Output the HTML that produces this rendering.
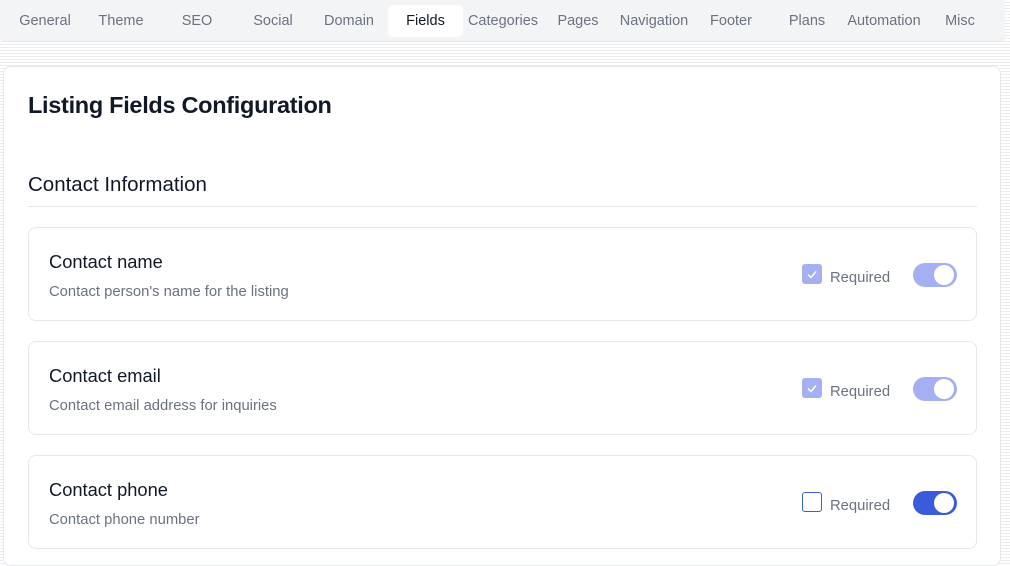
<!DOCTYPE html>
<html><head><style>
*{box-sizing:border-box;margin:0;padding:0}
body{width:1010px;height:558px;overflow:hidden;font-family:"Liberation Sans",sans-serif;background:repeating-linear-gradient(180deg,#fff 0,#fff 2px,#ececec 2px,#ececec 3px);position:relative}
.tabs{position:absolute;left:0;top:0;width:1005px;height:42px;background:#f3f4f6;border-bottom:1px solid #e5e7eb;border-radius:0 0 6px 6px}
.tab{position:absolute;top:5px;height:32px;line-height:33px;font-size:14.5px;color:#6b7280;text-align:center}
.tab.act{background:#fff;color:#111827;border-radius:5px}
.card{position:absolute;left:3px;top:66px;width:998px;height:500px;background:#fff;border:1px solid #e5e7eb;border-radius:8px}
h1{position:absolute;left:24px;top:25px;font-size:23.5px;font-weight:bold;color:#111827;letter-spacing:-0.3px}
h2{position:absolute;left:24px;top:106px;font-size:20.5px;font-weight:normal;color:#111827}
.hr{position:absolute;left:24px;top:139px;width:949px;height:1px;background:#e5e7eb}
.f{position:absolute;left:24px;width:949px;height:94px;border:1px solid #e5e7eb;border-radius:8px}
.f .n{position:absolute;left:20px;top:23px;font-size:18.3px;color:#111827}
.f .d{position:absolute;left:20px;top:56px;font-size:14.8px;color:#6b7280}
.cb{position:absolute;left:773px;top:36px;width:20px;height:20px;border-radius:3px;background:#a5b0f3}
.cb.off{background:#fff;border:1.5px solid #3b5bdb}
.rq{position:absolute;left:801px;top:42px;font-size:14.8px;color:#6b7280}
.tg{position:absolute;left:884px;top:35px;width:44px;height:24px;border-radius:12px;background:#a5b0f3}
.tg.on{background:#3b5bdb}
.tg::after{content:"";position:absolute;right:3px;top:2px;width:20px;height:20px;border-radius:50%;background:#fff}
</style></head><body>
<div class="tabs">
<div class="tab" style="left:10px;width:70px">General</div>
<div class="tab" style="left:88px;width:66px">Theme</div>
<div class="tab" style="left:170px;width:54px">SEO</div>
<div class="tab" style="left:243px;width:60px">Social</div>
<div class="tab" style="left:318px;width:62px">Domain</div>
<div class="tab act" style="left:388px;width:75px">Fields</div>
<div class="tab" style="left:464px;width:78px">Categories</div>
<div class="tab" style="left:553px;width:50px">Pages</div>
<div class="tab" style="left:614px;width:80px">Navigation</div>
<div class="tab" style="left:704px;width:54px">Footer</div>
<div class="tab" style="left:783px;width:48px">Plans</div>
<div class="tab" style="left:842px;width:84px">Automation</div>
<div class="tab" style="left:938px;width:44px">Misc</div>
</div>
<div class="card">
<h1>Listing Fields Configuration</h1>
<h2>Contact Information</h2>
<div class="hr"></div>
<div class="f" style="top:160px"><div class="n">Contact name</div><div class="d">Contact person's name for the listing</div>
<div class="cb"><svg width="20" height="20"><path d="M6 10.5l3 3 5-6" stroke="#fff" stroke-width="1.5" fill="none"/></svg></div><div class="rq">Required</div><div class="tg"></div></div>
<div class="f" style="top:274px"><div class="n">Contact email</div><div class="d">Contact email address for inquiries</div>
<div class="cb"><svg width="20" height="20"><path d="M6 10.5l3 3 5-6" stroke="#fff" stroke-width="1.5" fill="none"/></svg></div><div class="rq">Required</div><div class="tg"></div></div>
<div class="f" style="top:388px"><div class="n">Contact phone</div><div class="d">Contact phone number</div>
<div class="cb off"></div><div class="rq">Required</div><div class="tg on"></div></div>
</div>
</body></html>
